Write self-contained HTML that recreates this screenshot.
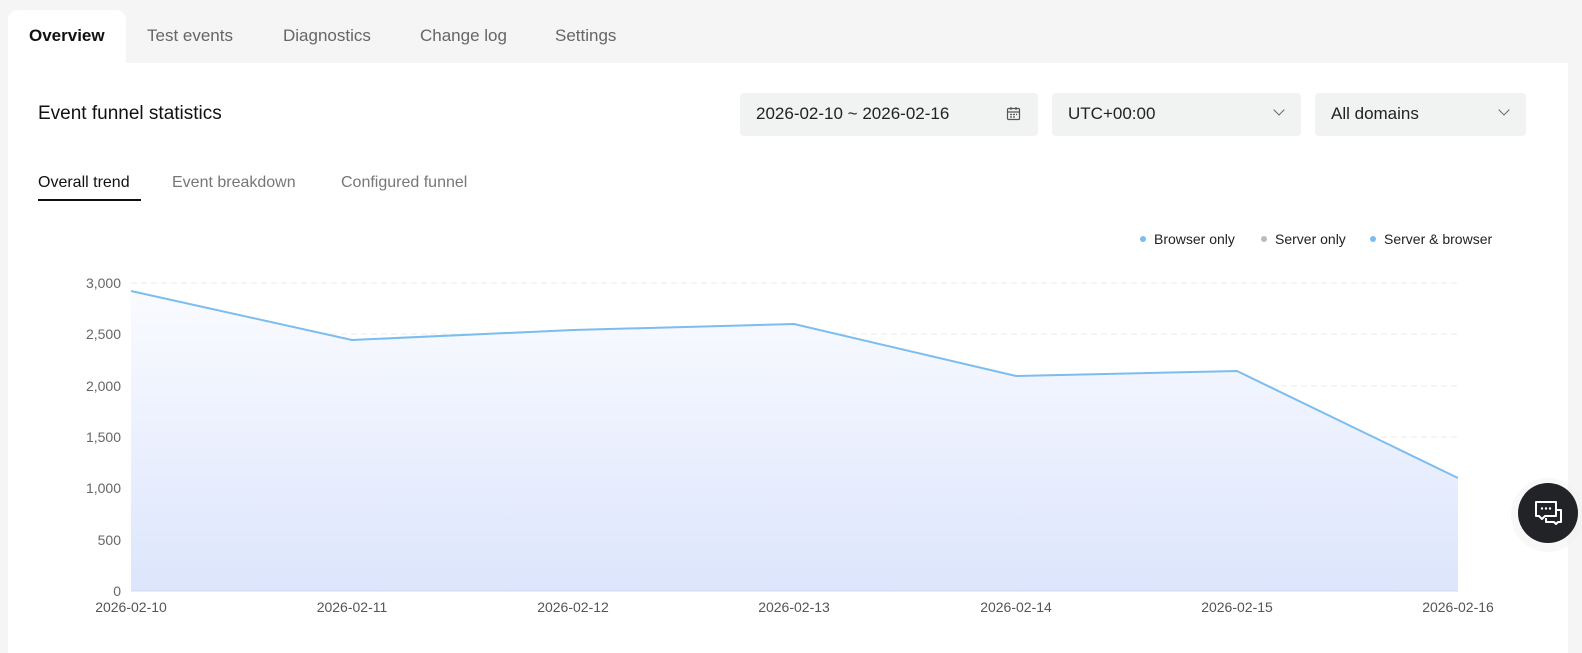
<!DOCTYPE html>
<html><head><meta charset="utf-8"><style>
*{margin:0;padding:0;box-sizing:border-box}
body{width:1582px;height:642px;background:#f5f5f5;font-family:"Liberation Sans",sans-serif;position:relative;overflow:hidden}
.card{position:absolute;left:8px;top:63px;width:1560px;height:590px;background:#fff}
.tab{position:absolute;top:26px;font-size:17px;color:#666}
.tabA{position:absolute;left:8px;top:10px;width:118px;height:60px;background:#fff;border-radius:10px 10px 0 0}
.sel{position:absolute;top:93px;height:43px;background:#f1f2f2;border-radius:4px;font-size:17px;color:#222;padding:11px 16px}
.chev{position:absolute;right:18px;top:13px;width:8px;height:8px;border-right:1.3px solid #666;border-bottom:1.3px solid #666;transform:rotate(45deg)}
.sub{position:absolute;top:174px;font-size:16px;color:#777}
.lg{position:absolute;top:231px;font-size:14px;color:#222}
.dot{display:inline-block;width:6px;height:6px;border-radius:50%;margin:0 8px 2px 0;vertical-align:middle}
</style></head><body>
<div class="tabA"></div>
<div class="card"></div>
<div class="tab" style="left:29px;color:#111;font-weight:bold;font-size:17px">Overview</div>
<div class="tab" style="left:147px">Test events</div>
<div class="tab" style="left:283px">Diagnostics</div>
<div class="tab" style="left:420px">Change log</div>
<div class="tab" style="left:555px">Settings</div>
<div style="position:absolute;left:38px;top:103px;font-size:19px;color:#111">Event funnel statistics</div>
<div class="sel" style="left:740px;width:298px">2026-02-10 ~ 2026-02-16
<svg style="position:absolute;right:17px;top:13px" width="15" height="15" viewBox="0 0 15 15" fill="none" stroke="#555" stroke-width="1.2"><rect x="1.5" y="2.5" width="12" height="11" rx="1"/><path d="M1.5 6h12M5 1v3M10 1v3M4 8.5h2M7 8.5h2M10 8.5h1M4 11h2M7 11h2"/></svg></div>
<div class="sel" style="left:1052px;width:249px">UTC+00:00<div class="chev"></div></div>
<div class="sel" style="left:1315px;width:211px">All domains<div class="chev"></div></div>
<div class="sub" style="left:38px;color:#111">Overall trend</div>
<div style="position:absolute;left:38px;top:199px;width:103px;height:2px;background:#111"></div>
<div class="sub" style="left:172px">Event breakdown</div>
<div class="sub" style="left:341px">Configured funnel</div>
<div class="lg" style="left:1140px"><span class="dot" style="background:#7abdee"></span>Browser only</div>
<div class="lg" style="left:1261px"><span class="dot" style="background:#bbb"></span>Server only</div>
<div class="lg" style="left:1370px"><span class="dot" style="background:#7abdee"></span>Server &amp; browser</div>
<svg style="position:absolute;left:0;top:0" width="1582" height="642">
<defs><linearGradient id="g" x1="0" y1="0" x2="0" y2="1"><stop offset="0" stop-color="#fafbff"/><stop offset="1" stop-color="#dce5fc"/></linearGradient></defs>
<g stroke="#ebebeb" stroke-dasharray="6 4"><line x1="131" x2="1458" y1="283" y2="283"/><line x1="131" x2="1458" y1="334" y2="334"/><line x1="131" x2="1458" y1="386" y2="386"/><line x1="131" x2="1458" y1="437" y2="437"/><line x1="131" x2="1458" y1="488" y2="488"/><line x1="131" x2="1458" y1="540" y2="540"/></g>
<path d="M131 291L352 340L573 330L794 324L1016 376L1237 371L1458 478L1458 591L131 591Z" fill="url(#g)"/>
<path d="M131 291L352 340L573 330L794 324L1016 376L1237 371L1458 478" fill="none" stroke="#7abdee" stroke-width="2"/>
<line x1="131" x2="1458" y1="591" y2="591" stroke="#cfd8e8"/>
<g font-family="Liberation Sans" font-size="14" fill="#666" text-anchor="end"><text x="121" y="288">3,000</text><text x="121" y="339">2,500</text><text x="121" y="391">2,000</text><text x="121" y="442">1,500</text><text x="121" y="493">1,000</text><text x="121" y="545">500</text><text x="121" y="596">0</text></g>
<g font-family="Liberation Sans" font-size="14" fill="#555" text-anchor="middle"><text x="131" y="612">2026-02-10</text><text x="352" y="612">2026-02-11</text><text x="573" y="612">2026-02-12</text><text x="794" y="612">2026-02-13</text><text x="1016" y="612">2026-02-14</text><text x="1237" y="612">2026-02-15</text><text x="1458" y="612">2026-02-16</text></g>
<circle cx="1548" cy="515" r="37" fill="#f2f2f2" opacity=".5"/>
<circle cx="1548" cy="513" r="30" fill="#222326"/>
<g fill="none" stroke="#fff" stroke-width="2" stroke-linejoin="round"><path d="M1536 502h20v14h-11l-3 3l-3-3h-3z"/><path d="M1556 510h5v12h-3l-2 2l-2-2h-8v-4"/></g>
<g fill="#fff"><circle cx="1542" cy="508.5" r="1.2"/><circle cx="1546" cy="508.5" r="1.2"/><circle cx="1550" cy="508.5" r="1.2"/></g>
</svg>
</body></html>
